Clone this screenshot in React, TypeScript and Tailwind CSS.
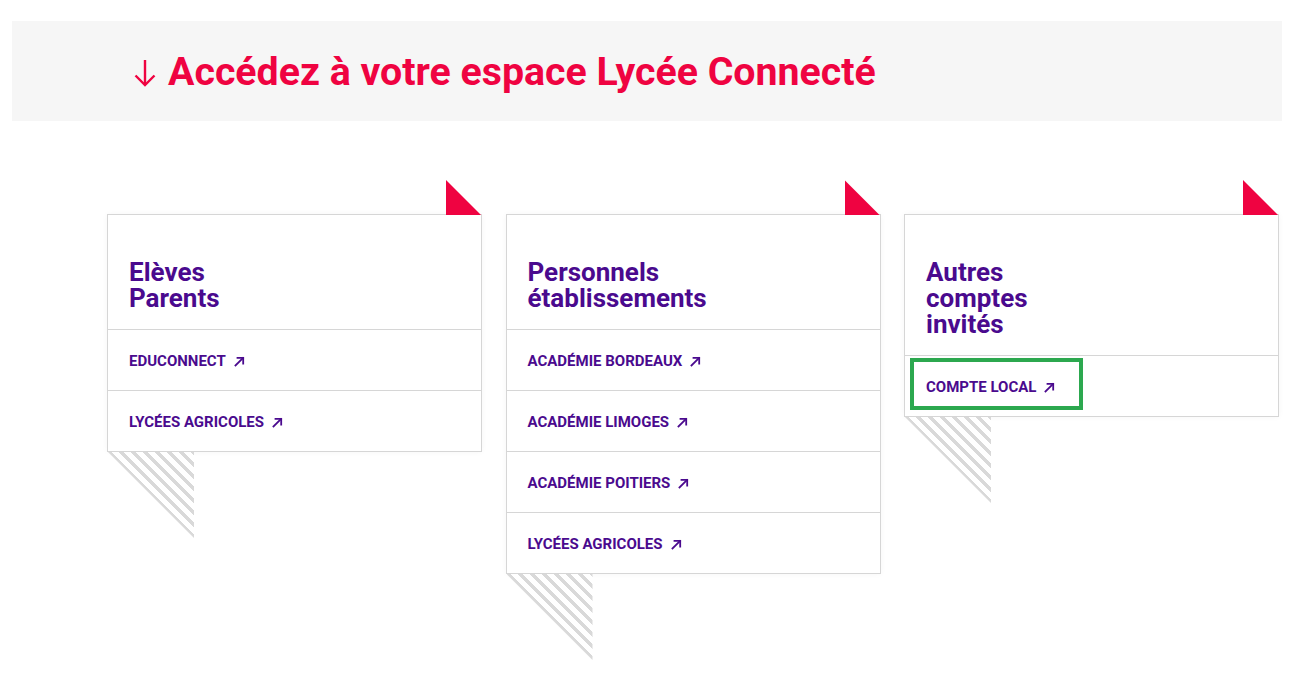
import React from "react";

const PURPLE = "text-[#4a0a8e]";

function ArrowUpRight() {
  return (
    <svg width="11" height="11" viewBox="0 0 11 11" className="ml-[8px] shrink-0" fill="none" stroke="#4a0a8e" strokeWidth="1.8" strokeLinecap="square">
      <path d="M1.5 9.5 L9 2" />
      <path d="M3.5 1.8 H9.2 V7.5" />
    </svg>
  );
}

type Card = { title: string[]; links: string[]; highlight?: boolean };

const cards: Card[] = [
  { title: ["Elèves", "Parents"], links: ["EDUCONNECT", "LYCÉES AGRICOLES"] },
  {
    title: ["Personnels", "établissements"],
    links: ["ACADÉMIE BORDEAUX", "ACADÉMIE LIMOGES", "ACADÉMIE POITIERS", "LYCÉES AGRICOLES"],
  },
  { title: ["Autres", "comptes", "invités"], links: ["COMPTE LOCAL"], highlight: true },
];

function CardBox({ card }: { card: Card }) {
  return (
    <div className="relative self-start border border-[#d6d6d6] bg-white shadow-[0_0_6px_rgba(0,0,0,0.04)]">
      <div className="absolute right-0 -top-[35px] h-[35px] w-[35px] bg-[#ef0341] [clip-path:polygon(0_0,0_100%,100%_100%)]" />
      <div className="absolute left-0 top-[calc(100%+1px)] h-[86px] w-[86px] bg-[repeating-linear-gradient(45deg,#d9d9d9_0px,#d9d9d9_4px,#ffffff_4px,#ffffff_8.5px)] [clip-path:polygon(0_0,100%_0,100%_100%)]" />
      <div className={`px-[21px] pt-[44px] pb-[18px] text-[26px] leading-[26px] font-bold ${PURPLE}`}>
        {card.title.map((t) => (
          <div key={t}>{t}</div>
        ))}
      </div>
      {card.links.map((l) => (
        <div key={l} className="relative flex h-[61px] items-center border-t border-[#d6d6d6] px-[21px] pt-[2px]">
          <span className={`text-[15px] font-bold leading-none ${PURPLE}`}>{l}</span>
          <ArrowUpRight />
          {card.highlight && (
            <div className="absolute left-[5px] top-[2px] h-[52px] w-[173px] border-4 border-[#2ca84f]" />
          )}
        </div>
      ))}
    </div>
  );
}

export default function App() {
  return (
    <div className="min-h-[700px] bg-white pl-[12px] pt-[21px] font-['Roboto',sans-serif]">
      <div className="flex h-[100px] w-[1270px] items-center bg-[#f6f6f6] pl-[121px] pt-[2px]">
        <svg width="24" height="28" viewBox="0 0 24 28" fill="none" stroke="#ef0341" strokeWidth="2.4" className="mr-[11px] mt-[1px]">
          <path d="M12 1 V26" />
          <path d="M2.5 16.5 L12 26 L21.5 16.5" />
        </svg>
        <h1 className="text-[39.3px] font-bold leading-[40px] text-[#ef0341]">Accédez à votre espace Lycée Connecté</h1>
      </div>
      <div className="ml-[95px] mt-[93px] grid w-[1172px] grid-cols-3 gap-x-[23.5px]">
        {cards.map((c, i) => (
          <CardBox key={i} card={c} />
        ))}
      </div>
    </div>
  );
}
